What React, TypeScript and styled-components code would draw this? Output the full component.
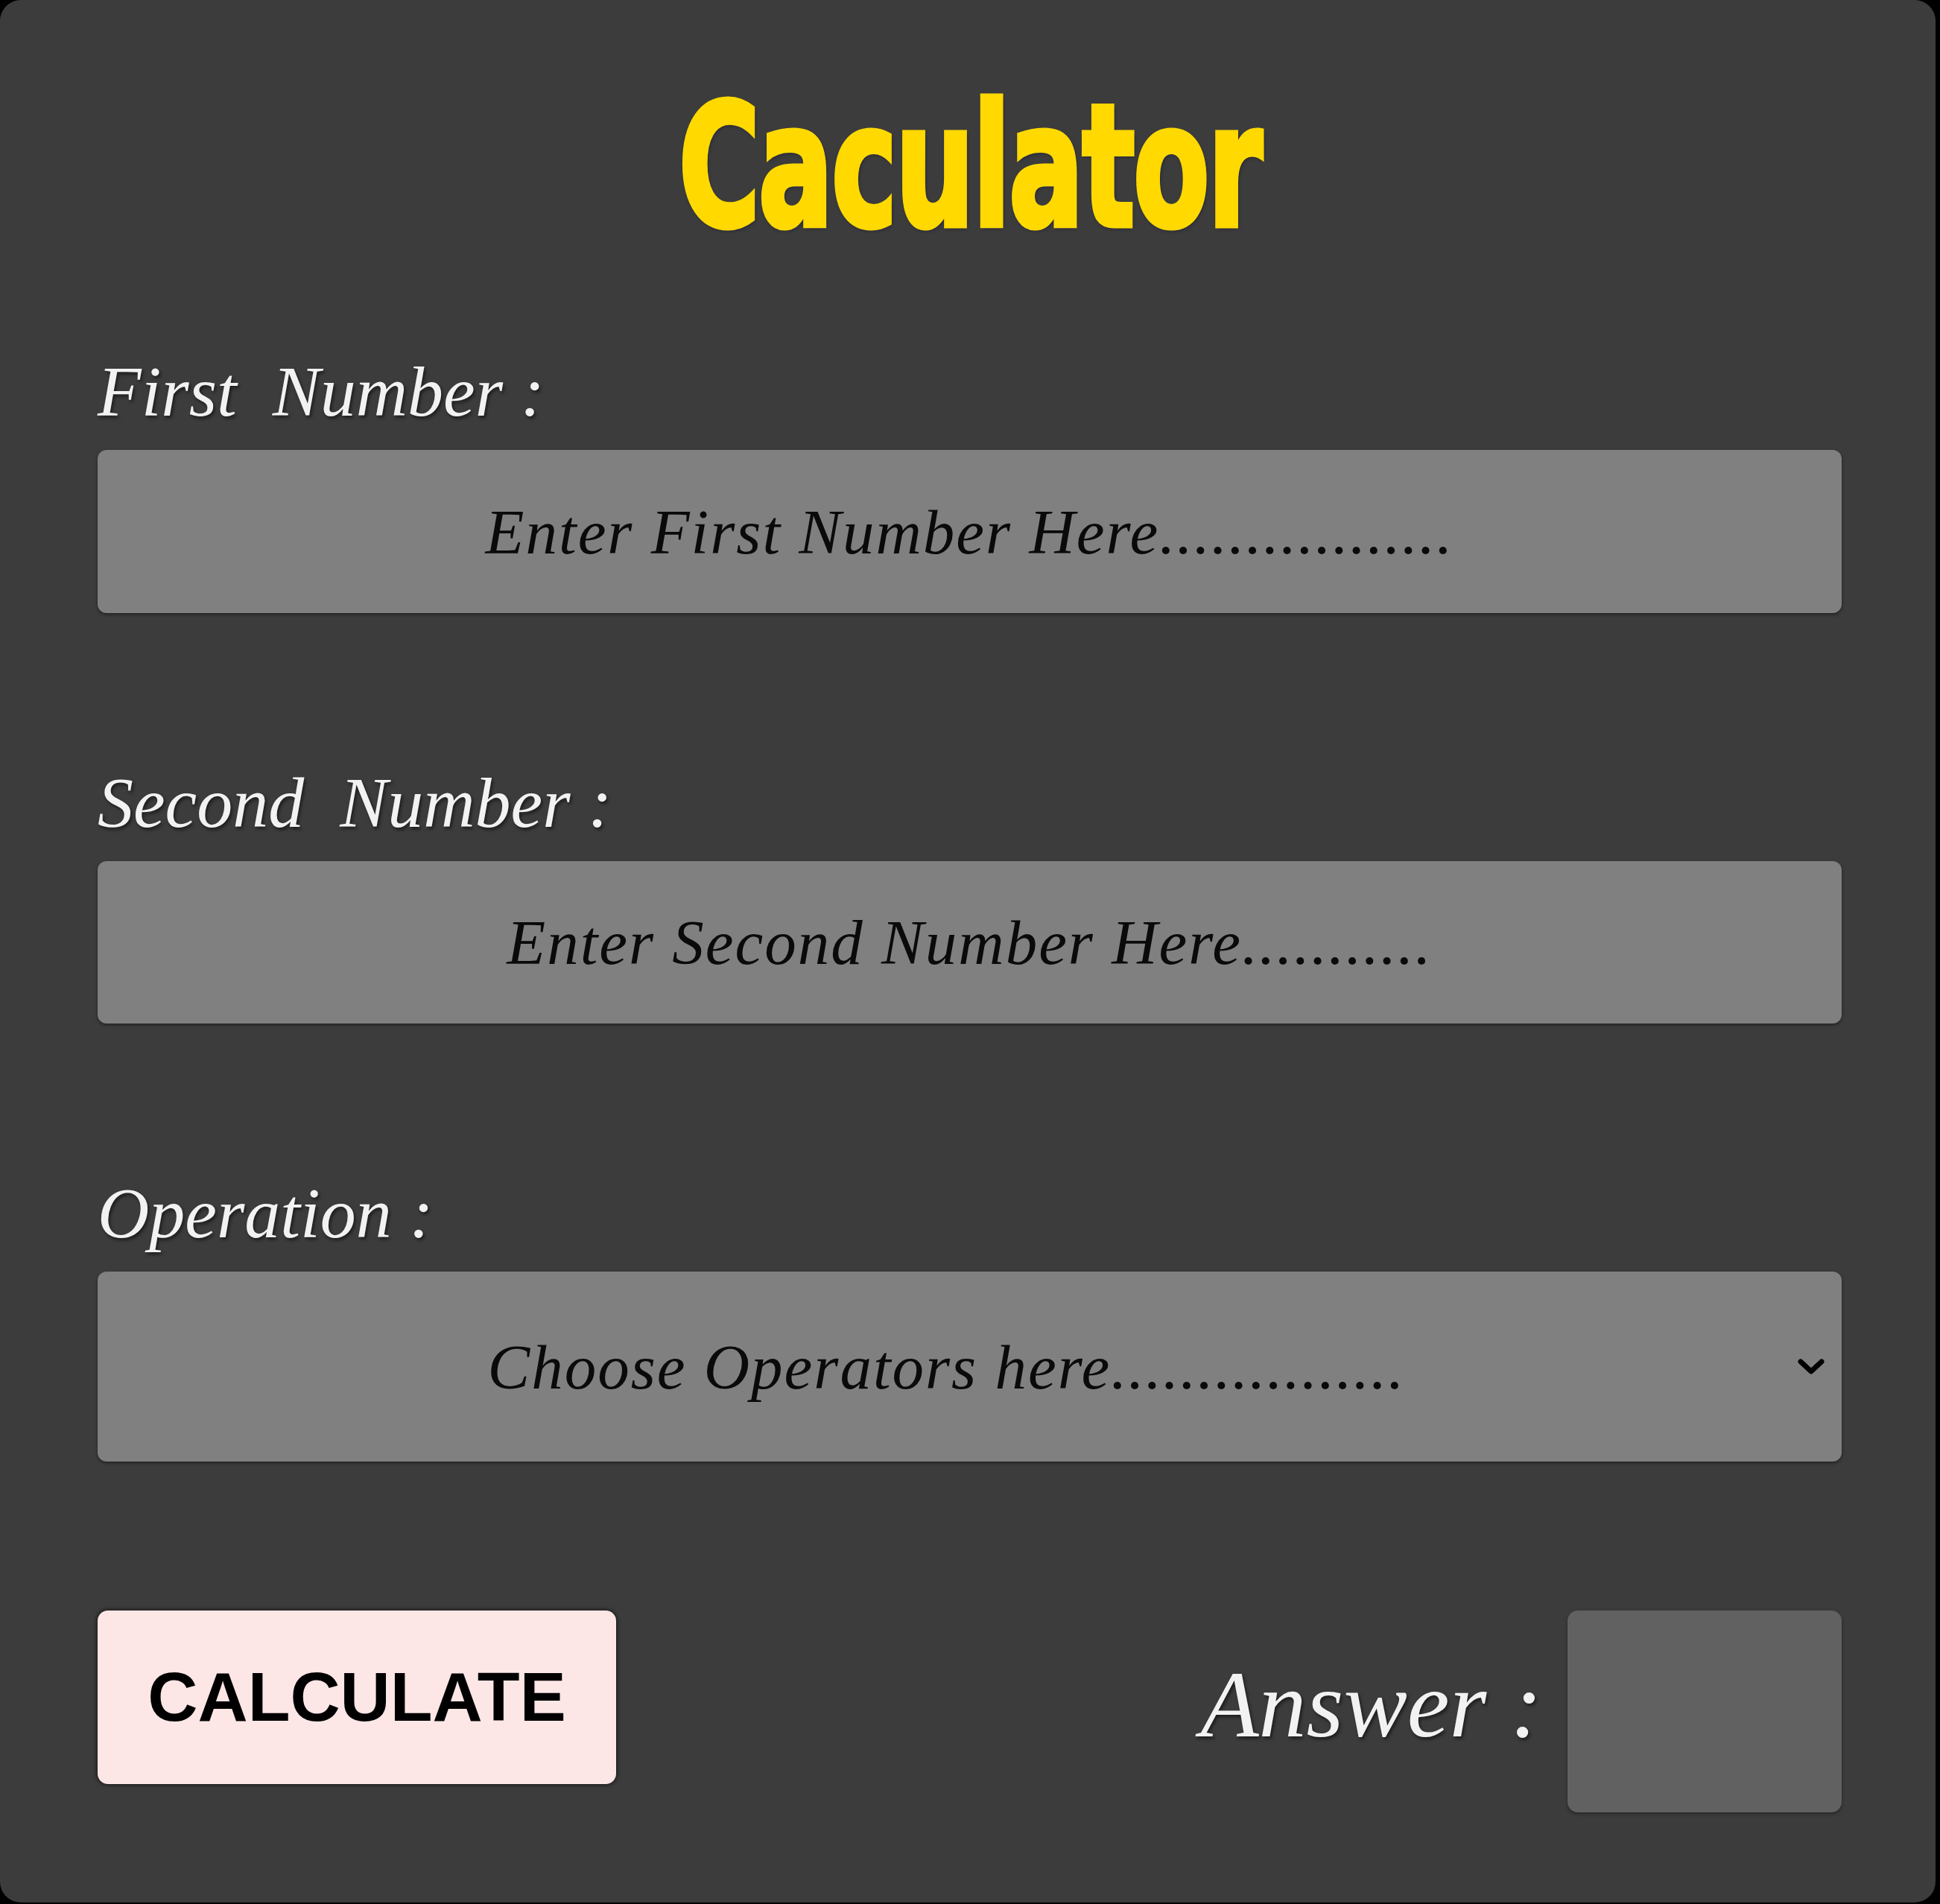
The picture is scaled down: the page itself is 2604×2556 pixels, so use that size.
import React from "react";
import styled, { createGlobalStyle } from "styled-components";

const Global = createGlobalStyle`
  html, body {
    margin: 0;
    padding: 0;
    background: #000;
  }
  * { box-sizing: border-box; }
`;

const Card = styled.main`
  width: 2598px;
  height: 2554px;
  background: #3c3c3c;
  border-radius: 28px;
  padding: 104px 126px 0 131px;
  display: flex;
  flex-direction: column;
`;

const TitleRow = styled.div`
  display: flex;
  justify-content: center;
  height: 235px;
`;

const Title = styled.h1`
  margin: 0;
  display: inline-block;
  font-family: "DejaVu Sans", "Liberation Sans", sans-serif;
  font-weight: 700;
  font-size: 228px;
  line-height: 240px;
  letter-spacing: -4px;
  color: #ffd900;
  -webkit-text-stroke: 7px #ffd900;
  transform: scaleX(0.655);
  text-shadow: 2px 3px 6px #14143c, 0 0 4px #1c1c48;
`;

const Form = styled.form`
  display: flex;
  flex-direction: column;
  gap: 207px;
  margin-top: 139px;
`;

const Field = styled.div`
  display: flex;
  flex-direction: column;
  gap: 30px;
`;

const Label = styled.label`
  font-family: "Liberation Serif", serif;
  font-style: italic;
  font-size: 96px;
  line-height: 96px;
  height: 96px;
  color: #f2f2f2;
  white-space: pre;
  text-shadow: 2px 3px 4px rgba(0, 0, 0, 0.55);
`;

const TextInput = styled.input<{ $h: number }>`
  width: 100%;
  height: ${(p) => p.$h}px;
  border: none;
  outline: none;
  border-radius: 12px;
  background: #808080;
  box-shadow: 0 2px 4px rgba(0, 0, 0, 0.45);
  font-family: "Liberation Serif", serif;
  font-style: italic;
  font-size: 85px;
  letter-spacing: 2px;
  text-align: center;
  color: #000;
  &::placeholder {
    color: #0a0a0a;
    opacity: 1;
  }
`;

const SelectWrap = styled.div`
  position: relative;
  width: 100%;
`;

const Select = styled.select`
  width: 100%;
  height: 255px;
  appearance: none;
  -webkit-appearance: none;
  border: none;
  outline: none;
  border-radius: 12px;
  background: #808080;
  box-shadow: 0 2px 4px rgba(0, 0, 0, 0.45);
  font-family: "Liberation Serif", serif;
  font-style: italic;
  font-size: 85px;
  letter-spacing: 2px;
  color: #0a0a0a;
  text-align: center;
  text-align-last: center;
  padding: 0 62px 0 0;
`;

const Chevron = styled.svg`
  position: absolute;
  right: 22px;
  top: 116px;
  width: 38px;
  height: 24px;
  pointer-events: none;
`;

const BottomRow = styled.div`
  display: flex;
  justify-content: space-between;
  align-items: flex-start;
  margin-top: 200px;
`;

const CalcButton = styled.button`
  width: 696px;
  height: 233px;
  border: none;
  border-radius: 14px;
  background: #fce6e6;
  box-shadow: 0 0 6px rgba(0, 0, 0, 0.9);
  font-family: "Liberation Sans", Arial, sans-serif;
  font-weight: 700;
  font-size: 93px;
  color: #000;
  cursor: pointer;
  padding: 0;
`;

const AnswerGroup = styled.div`
  display: flex;
  align-items: flex-start;
  gap: 34px;
`;

const AnswerLabel = styled.span`
  margin-top: 62px;
  font-family: "Liberation Serif", serif;
  font-style: italic;
  font-size: 128px;
  line-height: 128px;
  color: #f2f2f2;
  white-space: pre;
  text-shadow: 2px 3px 4px rgba(0, 0, 0, 0.55);
`;

const AnswerBox = styled.output`
  display: block;
  width: 368px;
  height: 271px;
  border-radius: 14px;
  background: #616161;
  box-shadow: 0 2px 4px rgba(0, 0, 0, 0.4);
`;

export default function App() {
  return (
    <>
      <Global />
      <Card>
        <TitleRow>
          <Title>Caculator</Title>
        </TitleRow>
        <Form onSubmit={(e) => e.preventDefault()}>
          <Field>
            <Label htmlFor="first">{"First  Number :"}</Label>
            <TextInput
              id="first"
              $h={219}
              type="text"
              placeholder="Enter First Number Here................."
            />
          </Field>
          <Field>
            <Label htmlFor="second">{"Second  Number :"}</Label>
            <TextInput
              id="second"
              $h={218}
              type="text"
              placeholder="Enter Second Number Here..........."
            />
          </Field>
          <Field>
            <Label htmlFor="op">{"Operation :"}</Label>
            <SelectWrap>
              <Select id="op" defaultValue="">
                <option value="" disabled>
                  Choose Operators here.................
                </option>
                <option value="+">+</option>
                <option value="-">-</option>
                <option value="*">*</option>
                <option value="/">/</option>
              </Select>
              <Chevron viewBox="0 0 38 24">
                <path
                  d="M5 5 L19 18 L33 5"
                  fill="none"
                  stroke="#000"
                  strokeWidth="7"
                  strokeLinecap="round"
                  strokeLinejoin="round"
                />
              </Chevron>
            </SelectWrap>
          </Field>
        </Form>
        <BottomRow>
          <CalcButton type="button">CALCULATE</CalcButton>
          <AnswerGroup>
            <AnswerLabel>{"Answer :"}</AnswerLabel>
            <AnswerBox />
          </AnswerGroup>
        </BottomRow>
      </Card>
    </>
  );
}
